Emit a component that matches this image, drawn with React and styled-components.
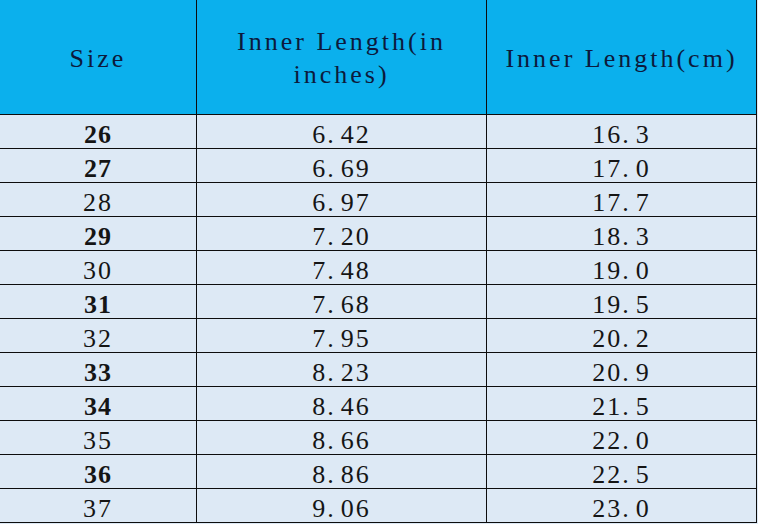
import React from 'react';
import styled, { createGlobalStyle } from 'styled-components';

const GlobalStyle = createGlobalStyle`
  html, body {
    margin: 0;
    padding: 0;
    background: #dde9f5;
  }
`;

const Table = styled.div`
  display: grid;
  grid-template-columns: 196px 289px 269px;
  grid-auto-rows: 33px;
  grid-template-rows: 114px;
  gap: 1px;
  background: #0d0d0d;
  width: 756px;
  padding: 0 1px 1px 0;
  font-family: "Liberation Serif", "DejaVu Serif", serif;
`;

const HeadCell = styled.div`
  background: #0bb0ed;
  color: #0c1a3c;
  font-size: 26px;
  letter-spacing: 3px;
  line-height: 33px;
  display: flex;
  align-items: center;
  justify-content: center;
  text-align: center;
  padding: 2px 4px 0;
`;

const Cell = styled.div`
  background: #dde9f5;
  color: #151515;
  font-size: 26px;
  font-weight: ${({ $bold }) => ($bold ? 700 : 400)};
  letter-spacing: ${({ $bold }) => ($bold ? '1px' : '2px')};
  display: flex;
  align-items: center;
  justify-content: center;
  padding-top: 6px;
  box-sizing: border-box;
`;

const Dot = styled.span`
  margin-right: 5px;
`;

const rows = [
  ['26', '6.42', '16.3', true],
  ['27', '6.69', '17.0', true],
  ['28', '6.97', '17.7', false],
  ['29', '7.20', '18.3', true],
  ['30', '7.48', '19.0', false],
  ['31', '7.68', '19.5', true],
  ['32', '7.95', '20.2', false],
  ['33', '8.23', '20.9', true],
  ['34', '8.46', '21.5', true],
  ['35', '8.66', '22.0', false],
  ['36', '8.86', '22.5', true],
  ['37', '9.06', '23.0', false],
];

const Value = ({ text }) => {
  const [whole, frac] = text.split('.');
  return (
    <Cell>
      {whole}
      <Dot>.</Dot>
      {frac}
    </Cell>
  );
};

export default function App() {
  return (
    <>
      <GlobalStyle />
      <Table>
        <HeadCell>Size</HeadCell>
        <HeadCell>Inner Length(in inches)</HeadCell>
        <HeadCell>Inner Length(cm)</HeadCell>
        {rows.map(([size, inch, cm, bold]) => (
          <React.Fragment key={size}>
            <Cell $bold={bold}>{size}</Cell>
            <Value text={inch} />
            <Value text={cm} />
          </React.Fragment>
        ))}
      </Table>
    </>
  );
}
